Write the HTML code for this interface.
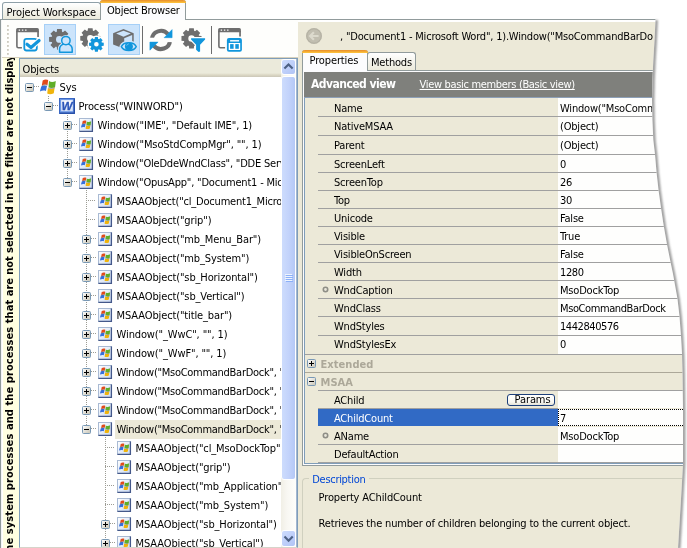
<!DOCTYPE html>
<html><head><meta charset="utf-8"><title>Object Browser</title><style>
*{box-sizing:border-box;margin:0;padding:0}
html,body{width:687px;height:548px;overflow:hidden;background:#fff}
body{position:relative;will-change:transform;font-family:"DejaVu Sans Condensed","DejaVu Sans","Liberation Sans",sans-serif;font-size:11px;font-stretch:condensed;color:#000;letter-spacing:-0.2px;line-height:13px}
.abs,.abs>*{position:absolute}
div,span,svg{position:absolute;white-space:nowrap}
.t{height:13px;line-height:13px}
</style></head><body>

<svg width="0" height="0" style="left:0;top:0">
<defs>
<linearGradient id="gwin" x1="0" y1="0" x2="1" y2="1"><stop offset="0" stop-color="#ffffff"/><stop offset="1" stop-color="#c9d9f2"/></linearGradient>
<linearGradient id="gword" x1="0" y1="0" x2="0" y2="1"><stop offset="0" stop-color="#ffffff"/><stop offset="1" stop-color="#d5e1f7"/></linearGradient>
<linearGradient id="gbox" x1="0" y1="0" x2="1" y2="1"><stop offset="0" stop-color="#ffffff"/><stop offset="1" stop-color="#c7c3b3"/></linearGradient>
<g id="flag">
<path d="M2.7 1.4C4.6 0.2 6.4 0.1 8.2 0.9L7.5 6.1C5.8 5.2 3.9 5.4 1.8 6.5Z" fill="#e24a1a"/>
<path d="M9 2.1C11.2 3.5 13.5 3.2 15.8 2L15.1 8.1C12.9 9.2 10.7 9.5 8.5 8.3Z" fill="#5fad28"/>
<path d="M1.2 7.4C3.2 6.4 5.1 6.3 7 7.1L5.9 12.1C4 11.3 2 11.5 -0.1 12.6Z" fill="#356fdc"/>
<path d="M7.9 9.1C10 10.4 12.3 10.2 14.6 9L13.8 14.3C11.6 15.4 9.4 15.7 7.2 14.6Z" fill="#f0b40c"/>
<path d="M1.8 6.9C3.9 5.8 5.8 5.6 7.4 6.4M8.3 8.8C10.6 10 12.8 9.6 15 8.5" fill="none" stroke="#4a4a4a" stroke-width="0.8" opacity="0.6"/>
</g>
<g id="icoSys"><use href="#flag"/></g>
<g id="icoWin">
<rect x="1.5" y="1.5" width="13" height="13" fill="url(#gwin)" stroke="#a9bad3"/>
<path d="M1.5 14.4H14.4V1.5" fill="none" stroke="#44588a" stroke-width="1.3"/>
<g transform="translate(3,3.2) scale(0.64,0.58)"><use href="#flag"/></g>
</g>
<g id="icoWord">
<rect x="0.5" y="0.5" width="15" height="15" fill="#6b97e6" stroke="#3b68c4"/>
<path d="M1 15.2H15.2V1" fill="none" stroke="#2549a0" stroke-width="1.2"/>
<rect x="2.2" y="2.2" width="11.6" height="11" fill="url(#gword)"/>
<text x="8" y="12" font-family="Liberation Sans,sans-serif" font-weight="bold" font-style="italic" font-size="11.7" text-anchor="middle" fill="#2a55b8" stroke="#2a55b8" stroke-width="0.3" letter-spacing="0" textLength="11" lengthAdjust="spacingAndGlyphs">W</text>
</g>
<g id="plus">
<rect x="0.5" y="0.5" width="8" height="8" rx="1" fill="url(#gbox)" stroke="#7898b5"/>
<path d="M2 4.5H7M4.5 2V7" stroke="#000" fill="none"/>
</g>
<g id="minus">
<rect x="0.5" y="0.5" width="8" height="8" rx="1" fill="url(#gbox)" stroke="#7898b5"/>
<path d="M2 4.5H7" stroke="#000" fill="none"/>
</g>
</defs></svg>

<div style="left:0px;top:19px;width:660px;height:1px;background:#919b9c"></div>
<div style="left:2px;top:2px;width:99px;height:17px;border:1px solid #8fa0a8;border-bottom:none;border-radius:3px 3px 0 0;background:linear-gradient(#ffffff,#f3f2ea 60%,#eceadc)"></div>
<div class="t" style="left:6.5px;top:6px;;letter-spacing:-0.09px">Project Workspace</div>
<div style="left:100px;top:0px;width:86px;height:21px;border:1px solid #919b9c;border-bottom:none;border-top:none;border-radius:3px 3px 0 0;background:#fcfcfe"></div>
<div style="left:100px;top:0px;width:86px;height:3px;border-radius:3px 3px 0 0;background:linear-gradient(#e68b2c,#ffc73c)"></div>
<div class="t" style="left:107px;top:4px;">Object Browser</div>
<div style="left:0px;top:20px;width:1px;height:528px;background:#8f999a"></div>
<div style="left:1px;top:20px;width:1px;height:528px;background:#f4f5f5"></div>
<div style="left:2px;top:20px;width:296px;height:37px;background:#fefefc"></div>
<div style="left:2px;top:57px;width:296px;height:1px;background:#d8d2bd"></div>
<div style="left:7px;top:25px;width:2px;height:32px;"><div style="left:0;top:0px;width:2px;height:2px;background:linear-gradient(135deg,#c4c1b6,#e6e4dc)"></div><div style="left:0;top:4px;width:2px;height:2px;background:linear-gradient(135deg,#c4c1b6,#e6e4dc)"></div><div style="left:0;top:8px;width:2px;height:2px;background:linear-gradient(135deg,#c4c1b6,#e6e4dc)"></div><div style="left:0;top:12px;width:2px;height:2px;background:linear-gradient(135deg,#c4c1b6,#e6e4dc)"></div><div style="left:0;top:16px;width:2px;height:2px;background:linear-gradient(135deg,#c4c1b6,#e6e4dc)"></div><div style="left:0;top:20px;width:2px;height:2px;background:linear-gradient(135deg,#c4c1b6,#e6e4dc)"></div><div style="left:0;top:24px;width:2px;height:2px;background:linear-gradient(135deg,#c4c1b6,#e6e4dc)"></div><div style="left:0;top:28px;width:2px;height:2px;background:linear-gradient(135deg,#c4c1b6,#e6e4dc)"></div></div>
<div style="left:44px;top:24px;width:32px;height:31px;background:#cce4fb;border:1px solid #a6d0f7"></div>
<div style="left:108px;top:24px;width:32px;height:31px;background:#cce4fb;border:1px solid #a6d0f7"></div>
<div style="left:142px;top:26px;width:1px;height:28px;background:#6d6d6d"></div>
<div style="left:211px;top:26px;width:1px;height:28px;background:#6d6d6d"></div>
<svg width="298" height="60" viewBox="0 0 298 60" style="left:0;top:0"><g><path d="M16.1 29.6Q16.1 28.0 17.700000000000003 28.0H37.300000000000004Q38.900000000000006 28.0 38.900000000000006 29.6V32.2H16.1Z" fill="#6e6e6e"/>
<path d="M38.050000000000004 31.0V37.1" fill="none" stroke="#6e6e6e" stroke-width="1.7"/>
<path d="M16.900000000000002 31.0V46.2Q16.900000000000002 47.7 18.400000000000002 47.7H21.9" fill="none" stroke="#6e6e6e" stroke-width="1.6"/>
<rect x="18.700000000000003" y="29.5" width="1.4" height="1.3" fill="#f4f4f4"/><rect x="21.900000000000002" y="29.5" width="1.4" height="1.3" fill="#f4f4f4"/><rect x="25.1" y="29.5" width="1.4" height="1.3" fill="#f4f4f4"/>
<rect x="24.3" y="38.9" width="12.5" height="11.6" rx="2.2" fill="#fefefd" stroke="#1196dc" stroke-width="1.8"/>
<path d="M34 45L39.1 40.5" fill="none" stroke="#fefefd" stroke-width="5.4" stroke-linecap="round"/>
<path d="M27 44.2L31 47.5L39.1 40.5" fill="none" stroke="#1196dc" stroke-width="3.1" stroke-linecap="round" stroke-linejoin="round"/>
</g><g><path d="M56.77 31.84 L57.04 29.07 L61.76 29.07 L62.03 31.84 L62.88 32.20 L65.03 30.42 L68.38 33.77 L66.60 35.92 L66.96 36.77 L69.73 37.04 L69.73 41.76 L66.96 42.03 L66.60 42.88 L68.38 45.03 L65.03 48.38 L62.88 46.60 L62.03 46.96 L61.76 49.73 L57.04 49.73 L56.77 46.96 L55.92 46.60 L53.77 48.38 L50.42 45.03 L52.20 42.88 L51.84 42.03 L49.07 41.76 L49.07 37.04 L51.84 36.77 L52.20 35.92 L50.42 33.77 L53.77 30.42 L55.92 32.20Z M62.80 39.40 A3.4 3.4 0 1 0 56.00 39.40 A3.4 3.4 0 1 0 62.80 39.40Z" fill="#6e6e6e" fill-rule="evenodd"/>
<circle cx="65.9" cy="40.6" r="5.7" fill="#cce4fb"/>
<path d="M59.6 52.2V49C59.6 46.2 61.4 44.9 63.3 44.1L68.5 44.1C70.4 44.9 72.2 46.2 72.2 49V52.2Z" fill="#cce4fb" stroke="#cce4fb" stroke-width="3.6" stroke-linejoin="round"/>
<path d="M59.6 52.2V49C59.6 46.2 61.4 44.9 63.3 44.1L68.5 44.1C70.4 44.9 72.2 46.2 72.2 49V52.2Z" fill="#cce4fb" stroke="#1196dc" stroke-width="1.5" stroke-linejoin="round"/>
<circle cx="65.9" cy="40.6" r="4.2" fill="#cce4fb" stroke="#1196dc" stroke-width="1.5"/></g><path d="M87.67 30.74 L88.00 28.26 L92.60 28.26 L92.93 30.74 L93.78 31.10 L95.77 29.58 L99.02 32.83 L97.50 34.82 L97.86 35.67 L100.34 36.00 L100.34 40.60 L97.86 40.93 L97.50 41.78 L99.02 43.77 L95.77 47.02 L93.78 45.50 L92.93 45.86 L92.60 48.34 L88.00 48.34 L87.67 45.86 L86.82 45.50 L84.83 47.02 L81.58 43.77 L83.10 41.78 L82.74 40.93 L80.26 40.60 L80.26 36.00 L82.74 35.67 L83.10 34.82 L81.58 32.83 L84.83 29.58 L86.82 31.10Z M93.50 38.30 A3.2 3.2 0 1 0 87.10 38.30 A3.2 3.2 0 1 0 93.50 38.30Z" fill="#6e6e6e" fill-rule="evenodd"/><circle cx="96.4" cy="44.3" r="8.8" fill="#fefefd"/><path d="M94.72 38.85 L94.91 36.95 L97.89 36.95 L98.08 38.85 L99.06 39.26 L100.54 38.05 L102.65 40.16 L101.44 41.64 L101.85 42.62 L103.75 42.81 L103.75 45.79 L101.85 45.98 L101.44 46.96 L102.65 48.44 L100.54 50.55 L99.06 49.34 L98.08 49.75 L97.89 51.65 L94.91 51.65 L94.72 49.75 L93.74 49.34 L92.26 50.55 L90.15 48.44 L91.36 46.96 L90.95 45.98 L89.05 45.79 L89.05 42.81 L90.95 42.62 L91.36 41.64 L90.15 40.16 L92.26 38.05 L93.74 39.26Z M98.70 44.30 A2.3 2.3 0 1 0 94.10 44.30 A2.3 2.3 0 1 0 98.70 44.30Z" fill="#1196dc" fill-rule="evenodd"/><g>
<path d="M123.5 29.1L133.7 33.2V44.6L123.5 48.6L113.1 44.6V33.2Z" fill="#6e6e6e"/>
<path d="M123.5 30.7L130.9 33.6L123.5 36.7L116.1 33.6Z" fill="#cce4fb"/>
<path d="M124.2 38.2L132.2 35V43.6L124.2 46.8Z" fill="#cce4fb"/>
<path d="M121.4 46.6C123.6 41.5 134 41.5 136.2 46.6C134 51.7 123.6 51.7 121.4 46.6Z" fill="#cce4fb" stroke="#cce4fb" stroke-width="4" stroke-linejoin="round"/>
<path d="M121.4 46.6C123.6 41.5 134 41.5 136.2 46.6C134 51.7 123.6 51.7 121.4 46.6Z" fill="#cce4fb" stroke="#1196dc" stroke-width="1.5" stroke-linejoin="round"/>
<circle cx="128.9" cy="46.6" r="4.0" fill="#1196dc"/><path d="M126.7 45.6A2.6 2.6 0 0 1 128.8 43.8" fill="none" stroke="#7cc8f0" stroke-width="0.9"/>
</g><g>
<path d="M151.8 37.7V39.9A9.1 9.1 0 0 1 168.07 34.30" fill="none" stroke="#6e6e6e" stroke-width="4" transform=""/>
<rect x="149" y="37.7" width="6" height="4" fill="#fefefd"/>
<path d="M170.0 42.1V39.9A9.1 9.1 0 0 1 153.73 45.50" fill="none" stroke="#6e6e6e" stroke-width="4"/>
<rect x="167" y="38.1" width="6" height="4" fill="#fefefd"/>
<path d="M172.1 29.6V37.7H164.1Z" fill="#1196dc" stroke="#1196dc" stroke-width="0.5" stroke-linejoin="round"/>
<path d="M149.9 50.2V42.1H158.1Z" fill="#1196dc" stroke="#1196dc" stroke-width="0.5" stroke-linejoin="round"/>
</g><path d="M188.87 30.84 L189.20 28.36 L193.80 28.36 L194.13 30.84 L194.98 31.20 L196.97 29.68 L200.22 32.93 L198.70 34.92 L199.06 35.77 L201.54 36.10 L201.54 40.70 L199.06 41.03 L198.70 41.88 L200.22 43.87 L196.97 47.12 L194.98 45.60 L194.13 45.96 L193.80 48.44 L189.20 48.44 L188.87 45.96 L188.02 45.60 L186.03 47.12 L182.78 43.87 L184.30 41.88 L183.94 41.03 L181.46 40.70 L181.46 36.10 L183.94 35.77 L184.30 34.92 L182.78 32.93 L186.03 29.68 L188.02 31.20Z M194.70 38.40 A3.2 3.2 0 1 0 188.30 38.40 A3.2 3.2 0 1 0 194.70 38.40Z" fill="#6e6e6e" fill-rule="evenodd"/><path d="M191.1 38.3H205.1V39.4L200.1 44.7V51.4L198.6 51.9L196.1 49.7V44.7L191.1 39.4Z" fill="#fefefd" stroke="#fefefd" stroke-width="2.6" stroke-linejoin="round"/><path d="M191.1 38.3H205.1V39.4L200.1 44.7V51.4L198.6 51.9L196.1 49.7V44.7L191.1 39.4Z" fill="#1196dc"/><g><path d="M218.1 29.6Q218.1 28.0 219.7 28.0H239.3Q240.9 28.0 240.9 29.6V32.2H218.1Z" fill="#6e6e6e"/>
<path d="M240.05 31.0V36.6" fill="none" stroke="#6e6e6e" stroke-width="1.7"/>
<path d="M218.9 31.0V46.2Q218.9 47.7 220.4 47.7H225.1" fill="none" stroke="#6e6e6e" stroke-width="1.6"/>
<rect x="220.7" y="29.5" width="1.4" height="1.3" fill="#f4f4f4"/><rect x="223.9" y="29.5" width="1.4" height="1.3" fill="#f4f4f4"/><rect x="227.1" y="29.5" width="1.4" height="1.3" fill="#f4f4f4"/>
<rect x="226" y="37.2" width="16.8" height="15.4" rx="2.6" fill="#fefefd"/>
<rect x="226.9" y="38.1" width="15" height="13.6" rx="2" fill="#1196dc"/>
<rect x="230.1" y="40.1" width="9" height="1.4" fill="#fff"/>
<rect x="228.7" y="43" width="11.5" height="7" fill="#fff"/>
<rect x="230.1" y="44.1" width="3.5" height="4.7" fill="#1196dc"/><rect x="235.3" y="44.1" width="3.5" height="4.7" fill="#1196dc"/>
</g></svg>
<div style="left:2px;top:58px;width:1px;height:490px;background:#fff"></div>
<div style="left:3px;top:58px;width:17px;height:490px;background:#ffffe1"><div style="left:0;top:0;width:17px;height:490px;overflow:hidden"><div id="vtxt" style="left:0.3px;top:511.2px;transform-origin:0 0;transform:rotate(-90deg);font-weight:bold;font-size:11px;letter-spacing:0.01px;height:14px;line-height:14px"><span style="position:static;letter-spacing:0.085px">Some system processes and the processes that </span><span style="position:static;letter-spacing:-0.064px">are not selected in the filter are not displayed.</span></div></div></div>
<div style="left:19px;top:58px;width:279px;height:490px;border:1px solid #7f9db9;border-bottom-color:#d6d4ca;background:#fff"></div>
<div style="left:20px;top:59px;width:261px;height:18px;background:linear-gradient(#ebeadb,#ebeadb 78%,#dcd8c5 88%,#cbc7b8)"></div>
<div class="t" style="left:22.5px;top:63px;;letter-spacing:-0.13px">Objects</div>
<div style="left:20px;top:78px;width:261px;height:469px;overflow:hidden"><div style="left:95px;top:342px;width:300px;height:18.5px;background:#ece9d8"></div><svg width="261" height="470" viewBox="0 0 261 470" style="left:0;top:0"><path d="M85.5 359V470" stroke="#9c9c94" stroke-width="1" stroke-dasharray="1 1" fill="none"/><path d="M66.5 112V347" stroke="#9c9c94" stroke-width="1" stroke-dasharray="1 1" fill="none"/><path d="M47.5 37V100" stroke="#9c9c94" stroke-width="1" stroke-dasharray="1 1" fill="none"/><path d="M28.5 18V24" stroke="#9c9c94" stroke-width="1" stroke-dasharray="1 1" fill="none"/><path d="M14 8.5H19" stroke="#9c9c94" stroke-width="1" stroke-dasharray="1 1" fill="none"/><use href="#minus" x="5" y="5"/><use href="#icoSys" x="20" y="1"/><path d="M33 27.5H38" stroke="#9c9c94" stroke-width="1" stroke-dasharray="1 1" fill="none"/><use href="#minus" x="24" y="24"/><use href="#icoWord" x="39" y="20"/><path d="M52 46.5H57" stroke="#9c9c94" stroke-width="1" stroke-dasharray="1 1" fill="none"/><use href="#plus" x="43" y="43"/><use href="#icoWin" x="58" y="39"/><path d="M52 65.5H57" stroke="#9c9c94" stroke-width="1" stroke-dasharray="1 1" fill="none"/><use href="#plus" x="43" y="62"/><use href="#icoWin" x="58" y="58"/><path d="M52 84.5H57" stroke="#9c9c94" stroke-width="1" stroke-dasharray="1 1" fill="none"/><use href="#plus" x="43" y="81"/><use href="#icoWin" x="58" y="77"/><path d="M52 103.5H57" stroke="#9c9c94" stroke-width="1" stroke-dasharray="1 1" fill="none"/><use href="#minus" x="43" y="100"/><use href="#icoWin" x="58" y="96"/><path d="M66 122.5H76" stroke="#9c9c94" stroke-width="1" stroke-dasharray="1 1" fill="none"/><use href="#icoWin" x="77" y="115"/><path d="M66 141.5H76" stroke="#9c9c94" stroke-width="1" stroke-dasharray="1 1" fill="none"/><use href="#icoWin" x="77" y="134"/><path d="M71 160.5H76" stroke="#9c9c94" stroke-width="1" stroke-dasharray="1 1" fill="none"/><use href="#plus" x="62" y="157"/><use href="#icoWin" x="77" y="153"/><path d="M71 179.5H76" stroke="#9c9c94" stroke-width="1" stroke-dasharray="1 1" fill="none"/><use href="#plus" x="62" y="176"/><use href="#icoWin" x="77" y="172"/><path d="M71 198.5H76" stroke="#9c9c94" stroke-width="1" stroke-dasharray="1 1" fill="none"/><use href="#plus" x="62" y="195"/><use href="#icoWin" x="77" y="191"/><path d="M71 217.5H76" stroke="#9c9c94" stroke-width="1" stroke-dasharray="1 1" fill="none"/><use href="#plus" x="62" y="214"/><use href="#icoWin" x="77" y="210"/><path d="M71 236.5H76" stroke="#9c9c94" stroke-width="1" stroke-dasharray="1 1" fill="none"/><use href="#plus" x="62" y="233"/><use href="#icoWin" x="77" y="229"/><path d="M71 255.5H76" stroke="#9c9c94" stroke-width="1" stroke-dasharray="1 1" fill="none"/><use href="#plus" x="62" y="252"/><use href="#icoWin" x="77" y="248"/><path d="M71 274.5H76" stroke="#9c9c94" stroke-width="1" stroke-dasharray="1 1" fill="none"/><use href="#plus" x="62" y="271"/><use href="#icoWin" x="77" y="267"/><path d="M71 293.5H76" stroke="#9c9c94" stroke-width="1" stroke-dasharray="1 1" fill="none"/><use href="#plus" x="62" y="290"/><use href="#icoWin" x="77" y="286"/><path d="M71 312.5H76" stroke="#9c9c94" stroke-width="1" stroke-dasharray="1 1" fill="none"/><use href="#plus" x="62" y="309"/><use href="#icoWin" x="77" y="305"/><path d="M71 331.5H76" stroke="#9c9c94" stroke-width="1" stroke-dasharray="1 1" fill="none"/><use href="#plus" x="62" y="328"/><use href="#icoWin" x="77" y="324"/><path d="M71 350.5H76" stroke="#9c9c94" stroke-width="1" stroke-dasharray="1 1" fill="none"/><use href="#minus" x="62" y="347"/><use href="#icoWin" x="77" y="343"/><path d="M85 369.5H95" stroke="#9c9c94" stroke-width="1" stroke-dasharray="1 1" fill="none"/><use href="#icoWin" x="96" y="362"/><path d="M85 388.5H95" stroke="#9c9c94" stroke-width="1" stroke-dasharray="1 1" fill="none"/><use href="#icoWin" x="96" y="381"/><path d="M85 407.5H95" stroke="#9c9c94" stroke-width="1" stroke-dasharray="1 1" fill="none"/><use href="#icoWin" x="96" y="400"/><path d="M85 426.5H95" stroke="#9c9c94" stroke-width="1" stroke-dasharray="1 1" fill="none"/><use href="#icoWin" x="96" y="419"/><path d="M90 445.5H95" stroke="#9c9c94" stroke-width="1" stroke-dasharray="1 1" fill="none"/><use href="#plus" x="81" y="442"/><use href="#icoWin" x="96" y="438"/><path d="M90 464.5H95" stroke="#9c9c94" stroke-width="1" stroke-dasharray="1 1" fill="none"/><use href="#plus" x="81" y="461"/><use href="#icoWin" x="96" y="457"/></svg><div class="t" style="left:39.6px;top:3px;letter-spacing:-0.13px">Sys</div><div class="t" style="left:58.6px;top:22px;letter-spacing:-0.13px">Process(&quot;WINWORD&quot;)</div><div class="t" style="left:77.6px;top:41px;letter-spacing:-0.13px">Window(&quot;IME&quot;, &quot;Default IME&quot;, 1)</div><div class="t" style="left:77.6px;top:60px;letter-spacing:-0.13px">Window(&quot;MsoStdCompMgr&quot;, &quot;&quot;, 1)</div><div class="t" style="left:77.6px;top:79px;letter-spacing:-0.2px">Window(&quot;OleDdeWndClass&quot;, &quot;DDE Server Window&quot;, 1)</div><div class="t" style="left:77.6px;top:98px;letter-spacing:-0.2px">Window(&quot;OpusApp&quot;, &quot;Document1 - Microsoft Word&quot;, 1)</div><div class="t" style="left:96.6px;top:117px;letter-spacing:-0.2px">MSAAObject(&quot;cl_Document1_Microsoft_Word&quot;)</div><div class="t" style="left:96.6px;top:136px;letter-spacing:-0.13px">MSAAObject(&quot;grip&quot;)</div><div class="t" style="left:96.6px;top:155px;letter-spacing:-0.13px">MSAAObject(&quot;mb_Menu_Bar&quot;)</div><div class="t" style="left:96.6px;top:174px;letter-spacing:-0.13px">MSAAObject(&quot;mb_System&quot;)</div><div class="t" style="left:96.6px;top:193px;letter-spacing:-0.13px">MSAAObject(&quot;sb_Horizontal&quot;)</div><div class="t" style="left:96.6px;top:212px;letter-spacing:-0.13px">MSAAObject(&quot;sb_Vertical&quot;)</div><div class="t" style="left:96.6px;top:231px;letter-spacing:-0.13px">MSAAObject(&quot;title_bar&quot;)</div><div class="t" style="left:96.6px;top:250px;letter-spacing:-0.13px">Window(&quot;_WwC&quot;, &quot;&quot;, 1)</div><div class="t" style="left:96.6px;top:269px;letter-spacing:-0.13px">Window(&quot;_WwF&quot;, &quot;&quot;, 1)</div><div class="t" style="left:96.6px;top:288px;letter-spacing:-0.28px">Window(&quot;MsoCommandBarDock&quot;, &quot;MsoDockLeft&quot;, 1)</div><div class="t" style="left:96.6px;top:307px;letter-spacing:-0.28px">Window(&quot;MsoCommandBarDock&quot;, &quot;MsoDockRight&quot;, 1)</div><div class="t" style="left:96.6px;top:326px;letter-spacing:-0.28px">Window(&quot;MsoCommandBarDock&quot;, &quot;MsoDockBottom&quot;, 1)</div><div class="t" style="left:96.6px;top:345px;letter-spacing:-0.28px">Window(&quot;MsoCommandBarDock&quot;, &quot;MsoDockTop&quot;, 1)</div><div class="t" style="left:115.6px;top:364px;letter-spacing:-0.13px">MSAAObject(&quot;cl_MsoDockTop&quot;)</div><div class="t" style="left:115.6px;top:383px;letter-spacing:-0.13px">MSAAObject(&quot;grip&quot;)</div><div class="t" style="left:115.6px;top:402px;letter-spacing:-0.13px">MSAAObject(&quot;mb_Application&quot;)</div><div class="t" style="left:115.6px;top:421px;letter-spacing:-0.13px">MSAAObject(&quot;mb_System&quot;)</div><div class="t" style="left:115.6px;top:440px;letter-spacing:-0.13px">MSAAObject(&quot;sb_Horizontal&quot;)</div><div class="t" style="left:115.6px;top:459px;letter-spacing:-0.13px">MSAAObject(&quot;sb_Vertical&quot;)</div></div>
<div style="left:281px;top:59px;width:15px;height:488px;background:linear-gradient(90deg,#f1efe6,#f8f7f2 40%,#fefefb)"></div>
<div style="left:296px;top:59px;width:1px;height:488px;background:#a3b7d0"></div>
<div style="left:281px;top:59px;width:15px;height:16px;border:1px solid #fff;border-radius:3px;background:linear-gradient(135deg,#cddcfd,#bccdf9 60%,#b0c4f5)"><svg width="15" height="17" viewBox="0 0 15 17" style="left:-1px;top:-1px"><path d="M3.4 9.6L7.5 5.4L11.6 9.6" fill="none" stroke="#4d6185" stroke-width="2.1"/></svg></div>
<div style="left:281px;top:530px;width:15px;height:17px;border:1px solid #fff;border-radius:3px;background:linear-gradient(135deg,#cddcfd,#bccdf9 60%,#b0c4f5)"><svg width="15" height="17" viewBox="0 0 15 17" style="left:-1px;top:-1px"><path d="M3.5 6.6L7.6 10.8L11.7 6.6" fill="none" stroke="#4d6185" stroke-width="2.1"/></svg></div>
<div style="left:281px;top:76px;width:15px;height:404px;border-radius:3px;background:linear-gradient(90deg,#cddcfd,#c3d3fb 50%,#b4c8f6);border:1px solid #fff"><div style="left:3px;top:197px;width:7px;height:1px;background:#eef4fe"></div><div style="left:4px;top:198px;width:7px;height:1px;background:#8cb0f8"></div><div style="left:3px;top:199px;width:7px;height:1px;background:#eef4fe"></div><div style="left:4px;top:200px;width:7px;height:1px;background:#8cb0f8"></div><div style="left:3px;top:201px;width:7px;height:1px;background:#eef4fe"></div><div style="left:4px;top:202px;width:7px;height:1px;background:#8cb0f8"></div><div style="left:3px;top:203px;width:7px;height:1px;background:#eef4fe"></div><div style="left:4px;top:204px;width:7px;height:1px;background:#8cb0f8"></div></div>
<div style="left:298px;top:22px;width:389px;height:526px;background:#ece9d8"></div>
<svg width="18" height="18" viewBox="0 0 18 18" style="left:305px;top:27px"><circle cx="9" cy="9" r="8" fill="#c1beb0"/><circle cx="9" cy="9" r="7.2" fill="none" stroke="#b3b0a2" stroke-width="1"/><path d="M13.6 9H5.6M8.9 5.2L5.1 9L8.9 12.8" fill="none" stroke="#dcdacd" stroke-width="2.2"/></svg>
<div class="t" style="left:340px;top:30px;">, &quot;Document1 - Microsoft Word&quot;, 1).Window(&quot;MsoCommandBarDo</div>
<div style="left:302px;top:70px;width:390px;height:396px;border:1px solid #919b9c;background:#fcfcfe"></div>
<div style="left:367px;top:52px;width:49px;height:18px;border:1px solid #919b9c;border-bottom:none;border-radius:3px 3px 0 0;background:linear-gradient(#ffffff,#f3f2ea 60%,#eceadc)"></div>
<div class="t" style="left:371px;top:56px;">Methods</div>
<div style="left:302px;top:50px;width:66px;height:21px;border:1px solid #919b9c;border-bottom:none;border-top:none;border-radius:3px 3px 0 0;background:#fcfcfe"></div>
<div style="left:302px;top:50px;width:66px;height:3px;border-radius:3px 3px 0 0;background:linear-gradient(#e68b2c,#ffc73c)"></div>
<div class="t" style="left:309.5px;top:54px;;letter-spacing:-0.13px">Properties</div>
<div style="left:304px;top:72px;width:390px;height:392px;border:1px solid #7f9db9;border-top:none;background:#ece9d8"></div>
<div style="left:304px;top:72px;width:390px;height:25px;background:#7f807c"></div>
<div style="left:304px;top:97px;width:390px;height:1px;background:#8da0b8"></div>
<div class="t" style="left:311px;top:78px;color:#fff;font-weight:bold;font-size:12px;letter-spacing:-0.53px">Advanced view</div>
<div class="t" style="left:419.6px;top:78px;color:#fff;text-decoration:underline;letter-spacing:-0.33px">View basic members (Basic view)</div>
<div style="left:558px;top:98px;width:140px;height:18px;background:#fefefd"></div>
<div style="left:318px;top:116px;width:380px;height:1px;background:#a0a0a0"></div>
<div class="t" style="left:334px;top:102px;">Name</div>
<div class="t" style="left:560px;top:102px;">Window(&quot;MsoCommandBarDock&quot;, &quot;MsoDockTop&quot;, 1)</div>
<div style="left:558px;top:117px;width:140px;height:18px;background:#fefefd"></div>
<div style="left:318px;top:135px;width:380px;height:1px;background:#a0a0a0"></div>
<div class="t" style="left:334px;top:120px;">NativeMSAA</div>
<div class="t" style="left:560px;top:120px;">(Object)</div>
<div style="left:558px;top:136px;width:140px;height:18px;background:#fefefd"></div>
<div style="left:318px;top:154px;width:380px;height:1px;background:#a0a0a0"></div>
<div class="t" style="left:334px;top:139px;">Parent</div>
<div class="t" style="left:560px;top:139px;">(Object)</div>
<div style="left:558px;top:155px;width:140px;height:17px;background:#fefefd"></div>
<div style="left:318px;top:172px;width:380px;height:1px;background:#a0a0a0"></div>
<div class="t" style="left:334px;top:158px;">ScreenLeft</div>
<div class="t" style="left:560px;top:158px;">0</div>
<div style="left:558px;top:173px;width:140px;height:17px;background:#fefefd"></div>
<div style="left:318px;top:190px;width:380px;height:1px;background:#a0a0a0"></div>
<div class="t" style="left:334px;top:176px;">ScreenTop</div>
<div class="t" style="left:560px;top:176px;;letter-spacing:-0.4px">26</div>
<div style="left:558px;top:191px;width:140px;height:17px;background:#fefefd"></div>
<div style="left:318px;top:208px;width:380px;height:1px;background:#a0a0a0"></div>
<div class="t" style="left:334px;top:194px;">Top</div>
<div class="t" style="left:560px;top:194px;;letter-spacing:-0.4px">30</div>
<div style="left:558px;top:209px;width:140px;height:17px;background:#fefefd"></div>
<div style="left:318px;top:226px;width:380px;height:1px;background:#a0a0a0"></div>
<div class="t" style="left:334px;top:212px;">Unicode</div>
<div class="t" style="left:560px;top:212px;">False</div>
<div style="left:558px;top:227px;width:140px;height:17px;background:#fefefd"></div>
<div style="left:318px;top:244px;width:380px;height:1px;background:#a0a0a0"></div>
<div class="t" style="left:334px;top:230px;">Visible</div>
<div class="t" style="left:560px;top:230px;">True</div>
<div style="left:558px;top:245px;width:140px;height:17px;background:#fefefd"></div>
<div style="left:318px;top:262px;width:380px;height:1px;background:#a0a0a0"></div>
<div class="t" style="left:334px;top:248px;">VisibleOnScreen</div>
<div class="t" style="left:560px;top:248px;">False</div>
<div style="left:558px;top:263px;width:140px;height:17px;background:#fefefd"></div>
<div style="left:318px;top:280px;width:380px;height:1px;background:#a0a0a0"></div>
<div class="t" style="left:334px;top:266px;">Width</div>
<div class="t" style="left:560px;top:266px;;letter-spacing:-0.4px">1280</div>
<div style="left:558px;top:281px;width:140px;height:17px;background:#fefefd"></div>
<div style="left:318px;top:298px;width:380px;height:1px;background:#a0a0a0"></div>
<div class="t" style="left:334px;top:284px;">WndCaption</div>
<div class="t" style="left:560px;top:284px;">MsoDockTop</div>
<svg width="7" height="7" viewBox="0 0 7 7" style="left:322px;top:286px"><circle cx="3.5" cy="3.5" r="2.2" fill="#e8e6da" stroke="#8e8e86" stroke-width="1.6"/></svg>
<div style="left:558px;top:299px;width:140px;height:17px;background:#fefefd"></div>
<div style="left:318px;top:316px;width:380px;height:1px;background:#a0a0a0"></div>
<div class="t" style="left:334px;top:302px;">WndClass</div>
<div class="t" style="left:560px;top:302px;;letter-spacing:-0.4px">MsoCommandBarDock</div>
<div style="left:558px;top:317px;width:140px;height:18px;background:#fefefd"></div>
<div style="left:318px;top:335px;width:380px;height:1px;background:#a0a0a0"></div>
<div class="t" style="left:334px;top:320px;">WndStyles</div>
<div class="t" style="left:560px;top:320px;;letter-spacing:-0.42px">1442840576</div>
<div style="left:558px;top:336px;width:140px;height:18px;background:#fefefd"></div>
<div style="left:305px;top:354px;width:380px;height:1px;background:#a0a0a0"></div>
<div class="t" style="left:334px;top:338px;">WndStylesEx</div>
<div class="t" style="left:560px;top:338px;">0</div>
<div style="left:305px;top:372px;width:390px;height:1px;background:#aca899"></div>
<svg width="9" height="9" viewBox="0 0 9 9" style="left:307px;top:359px"><use href="#plus"/></svg>
<div class="t" style="left:320.5px;top:358px;font-weight:bold;color:#aca899;letter-spacing:0.05px">Extended</div>
<div style="left:318px;top:390px;width:390px;height:1px;background:#a0a0a0"></div>
<svg width="9" height="9" viewBox="0 0 9 9" style="left:307px;top:377px"><use href="#minus"/></svg>
<div class="t" style="left:320.5px;top:376px;font-weight:bold;color:#aca899;letter-spacing:0.05px">MSAA</div>
<div style="left:558px;top:391px;width:140px;height:17px;background:#fefefd"></div>
<div style="left:318px;top:408px;width:240px;height:1px;background:#a0a0a0"></div>
<div class="t" style="left:334px;top:394px;">AChild</div>
<div class="t" style="left:560px;top:394px;"></div>
<div style="left:507px;top:394px;width:48px;height:12px;border:1px solid #1d3f7a;border-radius:3px;background:linear-gradient(#ffffff,#f8f7f1 70%,#e4e2d6)"></div>
<div class="t" style="left:514.6px;top:393px;;letter-spacing:-0.1px">Params</div>
<div style="left:558px;top:409px;width:140px;height:17px;background:#fefefd"></div>
<div style="left:318px;top:409px;width:240px;height:17px;background:#316ac5"></div>
<div class="t" style="left:334px;top:412px;color:#fff">AChildCount</div>
<div style="left:558px;top:409px;width:140px;height:1px;background:repeating-linear-gradient(90deg,#000 0 1px,#fff 1px 2px)"></div>
<div style="left:558px;top:425px;width:140px;height:1px;background:repeating-linear-gradient(90deg,#000 0 1px,#fff 1px 2px)"></div>
<div style="left:558px;top:409px;width:1px;height:17px;background:repeating-linear-gradient(#000 0 1px,#fff 1px 2px)"></div>
<div class="t" style="left:560px;top:412px;">7</div>
<div style="left:558px;top:427px;width:140px;height:17px;background:#fefefd"></div>
<div style="left:318px;top:444px;width:380px;height:1px;background:#a0a0a0"></div>
<div class="t" style="left:334px;top:430px;">AName</div>
<div class="t" style="left:560px;top:430px;">MsoDockTop</div>
<svg width="7" height="7" viewBox="0 0 7 7" style="left:322px;top:432px"><circle cx="3.5" cy="3.5" r="2.2" fill="#e8e6da" stroke="#8e8e86" stroke-width="1.6"/></svg>
<div style="left:558px;top:445px;width:140px;height:17px;background:#fefefd"></div>
<div style="left:318px;top:462px;width:380px;height:1px;background:#a0a0a0"></div>
<div class="t" style="left:334px;top:448px;">DefaultAction</div>
<div class="t" style="left:560px;top:448px;"></div>
<div style="left:302px;top:478px;width:392px;height:80px;border:1px solid #d0d0bf;border-radius:4px 0 0 0;border-right:none;border-bottom:none"></div>
<div style="left:309px;top:470px;width:60px;height:16px;background:#ece9d8"></div>
<div class="t" style="left:312.3px;top:473px;color:#0046d5;letter-spacing:-0.3px">Description</div>
<div class="t" style="left:318.6px;top:491px;;letter-spacing:-0.135px">Property AChildCount</div>
<div class="t" style="left:318.6px;top:517px;;letter-spacing:-0.175px">Retrieves the number of children belonging to the current object.</div>
<svg width="687" height="548" viewBox="0 0 687 548" style="left:0;top:0">
<defs><filter id="blur" x="-50%" y="-5%" width="200%" height="110%"><feGaussianBlur stdDeviation="1.1"/></filter>
<clipPath id="rc"><path d="M655.5 19 L654.5 40 L653.3 60 L652.4 80 L652 100 L652.4 120 L653.3 140 L655 154.5 L656.5 172 L658.5 190 L661 208 L663.7 225.7 L667 244.5 L670.5 262 L673 274 L677.5 299 L679.5 316.5 L681 336.5 L682 354 L682.5 374 L683 411 L683 463.5 L681 498.5 L679.5 523.5 L678 548 L678 560 L700 560 L700 0 L655.5 0 Z"/></clipPath></defs>
<path d="M655.5 19 L654.5 40 L653.3 60 L652.4 80 L652 100 L652.4 120 L653.3 140 L655 154.5 L656.5 172 L658.5 190 L661 208 L663.7 225.7 L667 244.5 L670.5 262 L673 274 L677.5 299 L679.5 316.5 L681 336.5 L682 354 L682.5 374 L683 411 L683 463.5 L681 498.5 L679.5 523.5 L678 548 L678 560 L700 560 L700 0 L655.5 0 Z" fill="#fff"/>
<g clip-path="url(#rc)"><path d="M655.5 19 L654.5 40 L653.3 60 L652.4 80 L652 100 L652.4 120 L653.3 140 L655 154.5 L656.5 172 L658.5 190 L661 208 L663.7 225.7 L667 244.5 L670.5 262 L673 274 L677.5 299 L679.5 316.5 L681 336.5 L682 354 L682.5 374 L683 411 L683 463.5 L681 498.5 L679.5 523.5 L678 548" fill="none" stroke="#9a9a9a" stroke-width="3.4" filter="url(#blur)" transform="translate(0.7,1)"/></g>
</svg>
</body></html>
